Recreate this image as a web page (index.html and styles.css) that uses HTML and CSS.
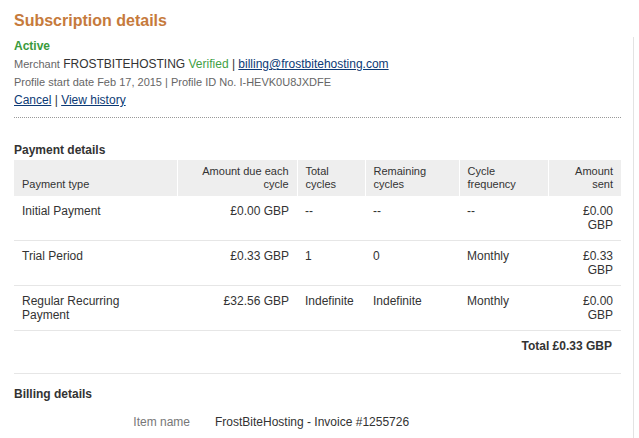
FILE: index.html
```html
<!DOCTYPE html>
<html>
<head>
<meta charset="utf-8">
<link rel="stylesheet" href="styles.css">
</head>
<body>
<div class="page">
  <main class="main">
    <h1 class="title">Subscription details</h1>
    <div class="status">Active</div>
    <div class="line"><span class="small">Merchant</span> FROSTBITEHOSTING <span class="verified">Verified</span> | <a class="link" href="#">billing@frostbitehosting.com</a></div>
    <div class="line small">Profile start date Feb 17, 2015 | Profile ID No. I-HEVK0U8JXDFE</div>
    <div class="line"><a class="link" href="#">Cancel</a> | <a class="link" href="#">View history</a></div>
    <hr class="dotted">

    <h2 class="section">Payment details</h2>
    <table class="pay">
      <colgroup>
        <col class="c1"><col class="c2"><col class="c3"><col class="c4"><col class="c5"><col class="c6">
      </colgroup>
      <thead>
        <tr>
          <th>Payment type</th>
          <th class="r">Amount due each cycle</th>
          <th>Total cycles</th>
          <th>Remaining cycles</th>
          <th>Cycle frequency</th>
          <th class="r">Amount sent</th>
        </tr>
      </thead>
      <tbody>
        <tr>
          <td>Initial Payment</td>
          <td class="r">£0.00 GBP</td>
          <td>--</td>
          <td>--</td>
          <td>--</td>
          <td class="r">£0.00 GBP</td>
        </tr>
        <tr>
          <td>Trial Period</td>
          <td class="r">£0.33 GBP</td>
          <td>1</td>
          <td>0</td>
          <td>Monthly</td>
          <td class="r">£0.33 GBP</td>
        </tr>
        <tr>
          <td>Regular Recurring Payment</td>
          <td class="r">£32.56 GBP</td>
          <td>Indefinite</td>
          <td>Indefinite</td>
          <td>Monthly</td>
          <td class="r">£0.00 GBP</td>
        </tr>
      </tbody>
    </table>
    <div class="total">Total £0.33 GBP</div>

    <h2 class="section billing">Billing details</h2>
    <div class="kv">
      <div class="k">Item name</div>
      <div class="v">FrostBiteHosting - Invoice #1255726</div>
    </div>
  </main>
  <aside class="side"></aside>
</div>
</body>
</html>
```

FILE: styles.css
```css
html, body {
  margin: 0;
  padding: 0;
  background: #fff;
}
body {
  font-family: "Liberation Sans", Arial, sans-serif;
  color: #333;
  font-size: 12px;
}
.page {
  display: flex;
  height: 438px;
  overflow: hidden;
}
.main {
  width: 607px;
  padding: 11px 0 0 14px;
  flex: none;
}
.side {
  flex: none;
  width: 0;
  margin-left: 12px;
  margin-top: 37px;
  border-left: 1px solid #e3e3e3;
}
.title {
  margin: 0;
  font-size: 16px;
  line-height: 20px;
  font-weight: bold;
  color: #c67a3c;
}
.status {
  margin-top: 6px;
  font-weight: bold;
  color: #3a9a3c;
  line-height: 18px;
}
.line {
  line-height: 18px;
}
.small {
  font-size: 11px;
  color: #666;
}
.verified {
  color: #3f9f45;
}
.link {
  color: #0c3a75;
  text-decoration: underline;
}
.dotted {
  margin: 8px 0 0 0;
  border: 0;
  border-top: 1px dotted #999;
  height: 0;
}
.section {
  margin: 24px 0 2px 0;
  font-size: 12px;
  line-height: 16px;
  font-weight: bold;
  color: #333;
}
.pay {
  width: 607px;
  border-collapse: collapse;
  table-layout: fixed;
}
.c1 { width: 163px; }
.c2 { width: 120px; }
.c3 { width: 68px; }
.c4 { width: 94px; }
.c5 { width: 89px; }
.c6 { width: 73px; }
.pay th {
  background: #eeeeee;
  font-weight: normal;
  font-size: 11px;
  line-height: 13px;
  text-align: left;
  vertical-align: bottom;
  padding: 5px 8px 5px 8px;
  border-left: 1px solid #fff;
  color: #333;
}
.pay th:first-child {
  border-left: 0;
}
.pay td {
  padding: 8px 8px;
  line-height: 14px;
  vertical-align: top;
  border-bottom: 1px solid #e6e6e6;
}
.pay .r {
  text-align: right;
}
.total {
  text-align: right;
  font-weight: bold;
  padding: 8px 9px 20px 8px;
  line-height: 14px;
  border-bottom: 1px solid #e6e6e6;
}
.billing {
  margin-top: 12px;
}
.kv {
  display: grid;
  grid-template-columns: 176px 1fr;
  column-gap: 25px;
  margin-top: 12px;
  line-height: 16px;
}
.k {
  text-align: right;
  color: #777;
}
.v {
  color: #333;
}
```
